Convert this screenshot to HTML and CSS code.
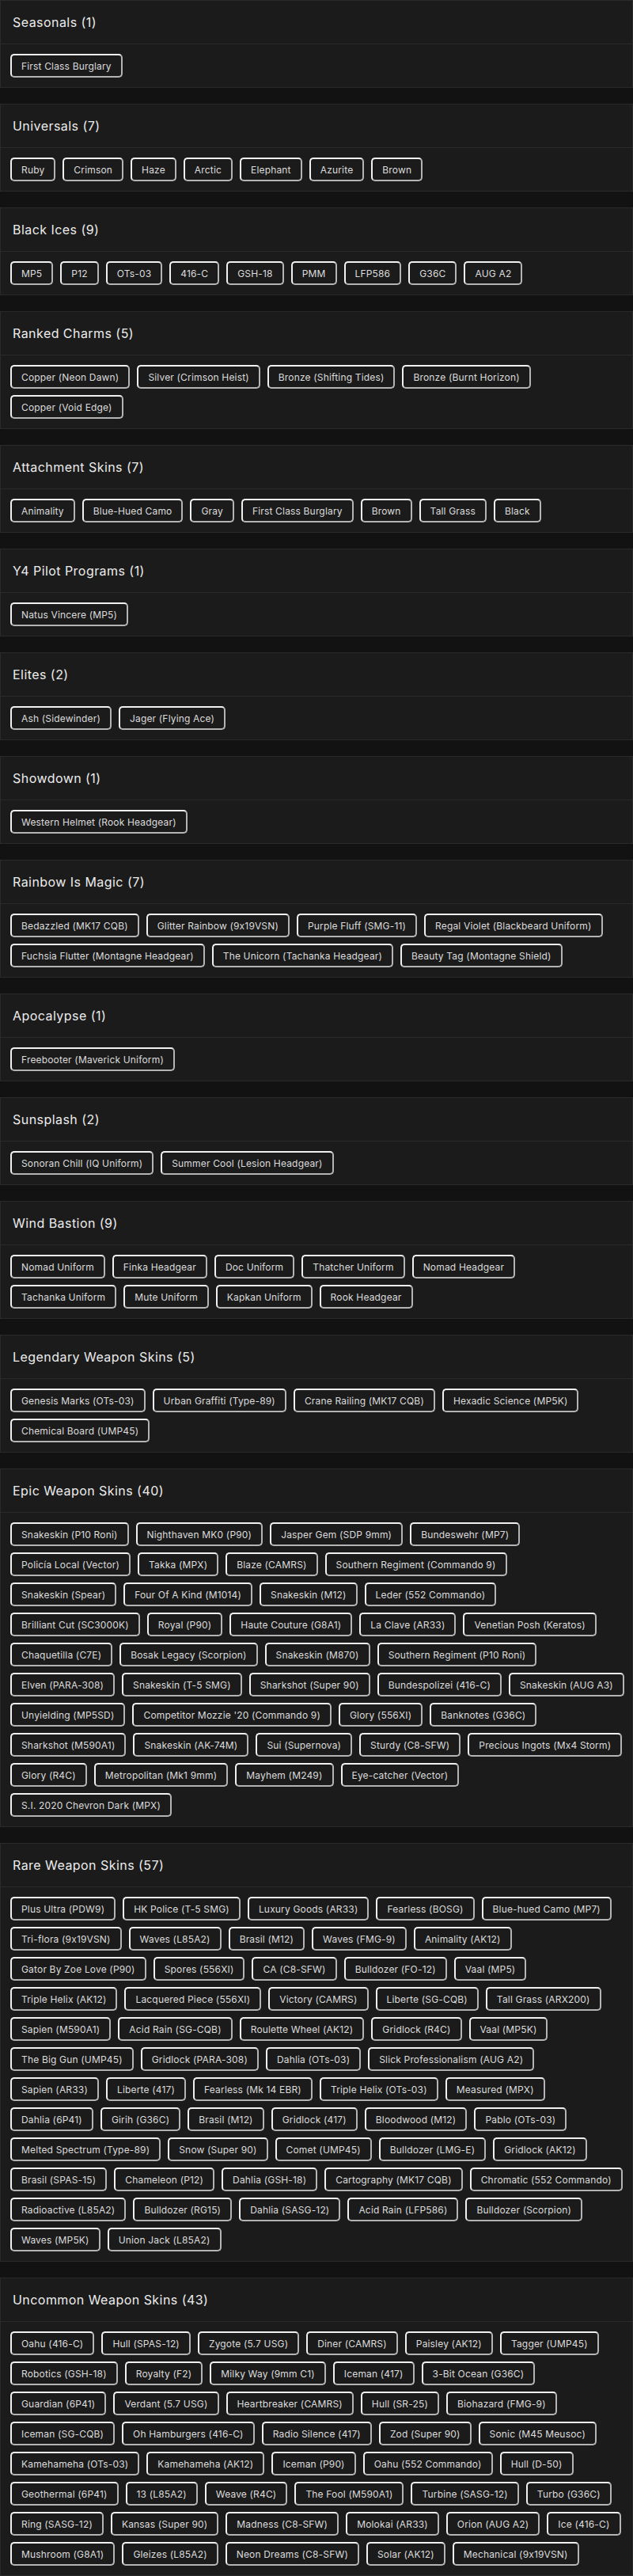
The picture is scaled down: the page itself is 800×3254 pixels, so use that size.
FILE: index.html
```html
<!DOCTYPE html>
<html lang="en">
<head>
<meta charset="utf-8">
<title>Skins</title>
<link rel="stylesheet" href="styles.css">
</head>
<body>
<main class="list">
<section class="card"><h2 class="card-title">Seasonals (1)</h2><div class="chips">
<div class="row"><span class="chip">First Class Burglary</span></div>
</div></section>
<section class="card"><h2 class="card-title">Universals (7)</h2><div class="chips">
<div class="row"><span class="chip">Ruby</span><span class="chip">Crimson</span><span class="chip">Haze</span><span class="chip">Arctic</span><span class="chip">Elephant</span><span class="chip">Azurite</span><span class="chip">Brown</span></div>
</div></section>
<section class="card"><h2 class="card-title">Black Ices (9)</h2><div class="chips">
<div class="row"><span class="chip">MP5</span><span class="chip">P12</span><span class="chip">OTs-03</span><span class="chip">416-C</span><span class="chip">GSH-18</span><span class="chip">PMM</span><span class="chip">LFP586</span><span class="chip">G36C</span><span class="chip">AUG A2</span></div>
</div></section>
<section class="card"><h2 class="card-title">Ranked Charms (5)</h2><div class="chips">
<div class="row"><span class="chip">Copper (Neon Dawn)</span><span class="chip">Silver (Crimson Heist)</span><span class="chip">Bronze (Shifting Tides)</span><span class="chip">Bronze (Burnt Horizon)</span></div>
<div class="row"><span class="chip">Copper (Void Edge)</span></div>
</div></section>
<section class="card"><h2 class="card-title">Attachment Skins (7)</h2><div class="chips">
<div class="row"><span class="chip">Animality</span><span class="chip">Blue-Hued Camo</span><span class="chip">Gray</span><span class="chip">First Class Burglary</span><span class="chip">Brown</span><span class="chip">Tall Grass</span><span class="chip">Black</span></div>
</div></section>
<section class="card"><h2 class="card-title">Y4 Pilot Programs (1)</h2><div class="chips">
<div class="row"><span class="chip">Natus Vincere (MP5)</span></div>
</div></section>
<section class="card"><h2 class="card-title">Elites (2)</h2><div class="chips">
<div class="row"><span class="chip">Ash (Sidewinder)</span><span class="chip">Jager (Flying Ace)</span></div>
</div></section>
<section class="card"><h2 class="card-title">Showdown (1)</h2><div class="chips">
<div class="row"><span class="chip">Western Helmet (Rook Headgear)</span></div>
</div></section>
<section class="card"><h2 class="card-title">Rainbow Is Magic (7)</h2><div class="chips">
<div class="row"><span class="chip">Bedazzled (MK17 CQB)</span><span class="chip">Glitter Rainbow (9x19VSN)</span><span class="chip">Purple Fluff (SMG-11)</span><span class="chip">Regal Violet (Blackbeard Uniform)</span></div>
<div class="row"><span class="chip">Fuchsia Flutter (Montagne Headgear)</span><span class="chip">The Unicorn (Tachanka Headgear)</span><span class="chip">Beauty Tag (Montagne Shield)</span></div>
</div></section>
<section class="card"><h2 class="card-title">Apocalypse (1)</h2><div class="chips">
<div class="row"><span class="chip">Freebooter (Maverick Uniform)</span></div>
</div></section>
<section class="card"><h2 class="card-title">Sunsplash (2)</h2><div class="chips">
<div class="row"><span class="chip">Sonoran Chill (IQ Uniform)</span><span class="chip">Summer Cool (Lesion Headgear)</span></div>
</div></section>
<section class="card"><h2 class="card-title">Wind Bastion (9)</h2><div class="chips">
<div class="row"><span class="chip">Nomad Uniform</span><span class="chip">Finka Headgear</span><span class="chip">Doc Uniform</span><span class="chip">Thatcher Uniform</span><span class="chip">Nomad Headgear</span></div>
<div class="row"><span class="chip">Tachanka Uniform</span><span class="chip">Mute Uniform</span><span class="chip">Kapkan Uniform</span><span class="chip">Rook Headgear</span></div>
</div></section>
<section class="card"><h2 class="card-title">Legendary Weapon Skins (5)</h2><div class="chips">
<div class="row"><span class="chip">Genesis Marks (OTs-03)</span><span class="chip">Urban Graffiti (Type-89)</span><span class="chip">Crane Railing (MK17 CQB)</span><span class="chip">Hexadic Science (MP5K)</span></div>
<div class="row"><span class="chip">Chemical Board (UMP45)</span></div>
</div></section>
<section class="card"><h2 class="card-title">Epic Weapon Skins (40)</h2><div class="chips">
<div class="row"><span class="chip">Snakeskin (P10 Roni)</span><span class="chip">Nighthaven MK0 (P90)</span><span class="chip">Jasper Gem (SDP 9mm)</span><span class="chip">Bundeswehr (MP7)</span></div>
<div class="row"><span class="chip">Policía Local (Vector)</span><span class="chip">Takka (MPX)</span><span class="chip">Blaze (CAMRS)</span><span class="chip">Southern Regiment (Commando 9)</span></div>
<div class="row"><span class="chip">Snakeskin (Spear)</span><span class="chip">Four Of A Kind (M1014)</span><span class="chip">Snakeskin (M12)</span><span class="chip">Leder (552 Commando)</span></div>
<div class="row"><span class="chip">Brilliant Cut (SC3000K)</span><span class="chip">Royal (P90)</span><span class="chip">Haute Couture (G8A1)</span><span class="chip">La Clave (AR33)</span><span class="chip">Venetian Posh (Keratos)</span></div>
<div class="row"><span class="chip">Chaquetilla (C7E)</span><span class="chip">Bosak Legacy (Scorpion)</span><span class="chip">Snakeskin (M870)</span><span class="chip">Southern Regiment (P10 Roni)</span></div>
<div class="row"><span class="chip">Elven (PARA-308)</span><span class="chip">Snakeskin (T-5 SMG)</span><span class="chip">Sharkshot (Super 90)</span><span class="chip">Bundespolizei (416-C)</span><span class="chip">Snakeskin (AUG A3)</span></div>
<div class="row"><span class="chip">Unyielding (MP5SD)</span><span class="chip">Competitor Mozzie '20 (Commando 9)</span><span class="chip">Glory (556XI)</span><span class="chip">Banknotes (G36C)</span></div>
<div class="row"><span class="chip">Sharkshot (M590A1)</span><span class="chip">Snakeskin (AK-74M)</span><span class="chip">Sui (Supernova)</span><span class="chip">Sturdy (C8-SFW)</span><span class="chip">Precious Ingots (Mx4 Storm)</span></div>
<div class="row"><span class="chip">Glory (R4C)</span><span class="chip">Metropolitan (Mk1 9mm)</span><span class="chip">Mayhem (M249)</span><span class="chip">Eye-catcher (Vector)</span></div>
<div class="row"><span class="chip">S.I. 2020 Chevron Dark (MPX)</span></div>
</div></section>
<section class="card"><h2 class="card-title">Rare Weapon Skins (57)</h2><div class="chips">
<div class="row"><span class="chip">Plus Ultra (PDW9)</span><span class="chip">HK Police (T-5 SMG)</span><span class="chip">Luxury Goods (AR33)</span><span class="chip">Fearless (BOSG)</span><span class="chip">Blue-hued Camo (MP7)</span></div>
<div class="row"><span class="chip">Tri-flora (9x19VSN)</span><span class="chip">Waves (L85A2)</span><span class="chip">Brasil (M12)</span><span class="chip">Waves (FMG-9)</span><span class="chip">Animality (AK12)</span></div>
<div class="row"><span class="chip">Gator By Zoe Love (P90)</span><span class="chip">Spores (556XI)</span><span class="chip">CA (C8-SFW)</span><span class="chip">Bulldozer (FO-12)</span><span class="chip">Vaal (MP5)</span></div>
<div class="row"><span class="chip">Triple Helix (AK12)</span><span class="chip">Lacquered Piece (556XI)</span><span class="chip">Victory (CAMRS)</span><span class="chip">Liberte (SG-CQB)</span><span class="chip">Tall Grass (ARX200)</span></div>
<div class="row"><span class="chip">Sapien (M590A1)</span><span class="chip">Acid Rain (SG-CQB)</span><span class="chip">Roulette Wheel (AK12)</span><span class="chip">Gridlock (R4C)</span><span class="chip">Vaal (MP5K)</span></div>
<div class="row"><span class="chip">The Big Gun (UMP45)</span><span class="chip">Gridlock (PARA-308)</span><span class="chip">Dahlia (OTs-03)</span><span class="chip">Slick Professionalism (AUG A2)</span></div>
<div class="row"><span class="chip">Sapien (AR33)</span><span class="chip">Liberte (417)</span><span class="chip">Fearless (Mk 14 EBR)</span><span class="chip">Triple Helix (OTs-03)</span><span class="chip">Measured (MPX)</span></div>
<div class="row"><span class="chip">Dahlia (6P41)</span><span class="chip">Girih (G36C)</span><span class="chip">Brasil (M12)</span><span class="chip">Gridlock (417)</span><span class="chip">Bloodwood (M12)</span><span class="chip">Pablo (OTs-03)</span></div>
<div class="row"><span class="chip">Melted Spectrum (Type-89)</span><span class="chip">Snow (Super 90)</span><span class="chip">Comet (UMP45)</span><span class="chip">Bulldozer (LMG-E)</span><span class="chip">Gridlock (AK12)</span></div>
<div class="row"><span class="chip">Brasil (SPAS-15)</span><span class="chip">Chameleon (P12)</span><span class="chip">Dahlia (GSH-18)</span><span class="chip">Cartography (MK17 CQB)</span><span class="chip">Chromatic (552 Commando)</span></div>
<div class="row"><span class="chip">Radioactive (L85A2)</span><span class="chip">Bulldozer (RG15)</span><span class="chip">Dahlia (SASG-12)</span><span class="chip">Acid Rain (LFP586)</span><span class="chip">Bulldozer (Scorpion)</span></div>
<div class="row"><span class="chip">Waves (MP5K)</span><span class="chip">Union Jack (L85A2)</span></div>
</div></section>
<section class="card"><h2 class="card-title">Uncommon Weapon Skins (43)</h2><div class="chips">
<div class="row"><span class="chip">Oahu (416-C)</span><span class="chip">Hull (SPAS-12)</span><span class="chip">Zygote (5.7 USG)</span><span class="chip">Diner (CAMRS)</span><span class="chip">Paisley (AK12)</span><span class="chip">Tagger (UMP45)</span></div>
<div class="row"><span class="chip">Robotics (GSH-18)</span><span class="chip">Royalty (F2)</span><span class="chip">Milky Way (9mm C1)</span><span class="chip">Iceman (417)</span><span class="chip">3-Bit Ocean (G36C)</span></div>
<div class="row"><span class="chip">Guardian (6P41)</span><span class="chip">Verdant (5.7 USG)</span><span class="chip">Heartbreaker (CAMRS)</span><span class="chip">Hull (SR-25)</span><span class="chip">Biohazard (FMG-9)</span></div>
<div class="row"><span class="chip">Iceman (SG-CQB)</span><span class="chip">Oh Hamburgers (416-C)</span><span class="chip">Radio Silence (417)</span><span class="chip">Zod (Super 90)</span><span class="chip">Sonic (M45 Meusoc)</span></div>
<div class="row"><span class="chip">Kamehameha (OTs-03)</span><span class="chip">Kamehameha (AK12)</span><span class="chip">Iceman (P90)</span><span class="chip">Oahu (552 Commando)</span><span class="chip">Hull (D-50)</span></div>
<div class="row"><span class="chip">Geothermal (6P41)</span><span class="chip">13 (L85A2)</span><span class="chip">Weave (R4C)</span><span class="chip">The Fool (M590A1)</span><span class="chip">Turbine (SASG-12)</span><span class="chip">Turbo (G36C)</span></div>
<div class="row"><span class="chip">Ring (SASG-12)</span><span class="chip">Kansas (Super 90)</span><span class="chip">Madness (C8-SFW)</span><span class="chip">Molokai (AR33)</span><span class="chip">Orion (AUG A2)</span><span class="chip">Ice (416-C)</span></div>
<div class="row"><span class="chip">Mushroom (G8A1)</span><span class="chip">Gleizes (L85A2)</span><span class="chip">Neon Dreams (C8-SFW)</span><span class="chip">Solar (AK12)</span><span class="chip">Mechanical (9x19VSN)</span></div>
</div></section>
</main>
</body>
</html>
```
FILE: styles.css
```css
* { box-sizing: border-box; }
html, body { margin: 0; padding: 0; background: #121212; }
body { font-family: "Inter", "Liberation Sans", sans-serif; color: #e4e4e4; }
.list { display: flex; flex-direction: column; gap: 20px; }
.card { background: #1b1b1b; border: 1px solid #2a2a2a; }
.card-title { margin: 0; height: 55px; padding: 0 15px; display: flex; align-items: center; font-size: 16px; font-weight: 400; color: #ececec; border-bottom: 1px solid #2a2a2a; letter-spacing: 0.45px; }
.chips { display: flex; flex-direction: column; gap: 8px; padding: 12px; }
.row { display: flex; gap: 9px; }
.chip { height: 30px; display: flex; align-items: center; padding: 0 12px; border: 2px solid; border-color: #f0f0f0 #b4b4b4 #b4b4b4 #f0f0f0; border-radius: 5px; font-size: 12px; color: #dcdcdc; white-space: nowrap; letter-spacing: 0.17px; }
```
